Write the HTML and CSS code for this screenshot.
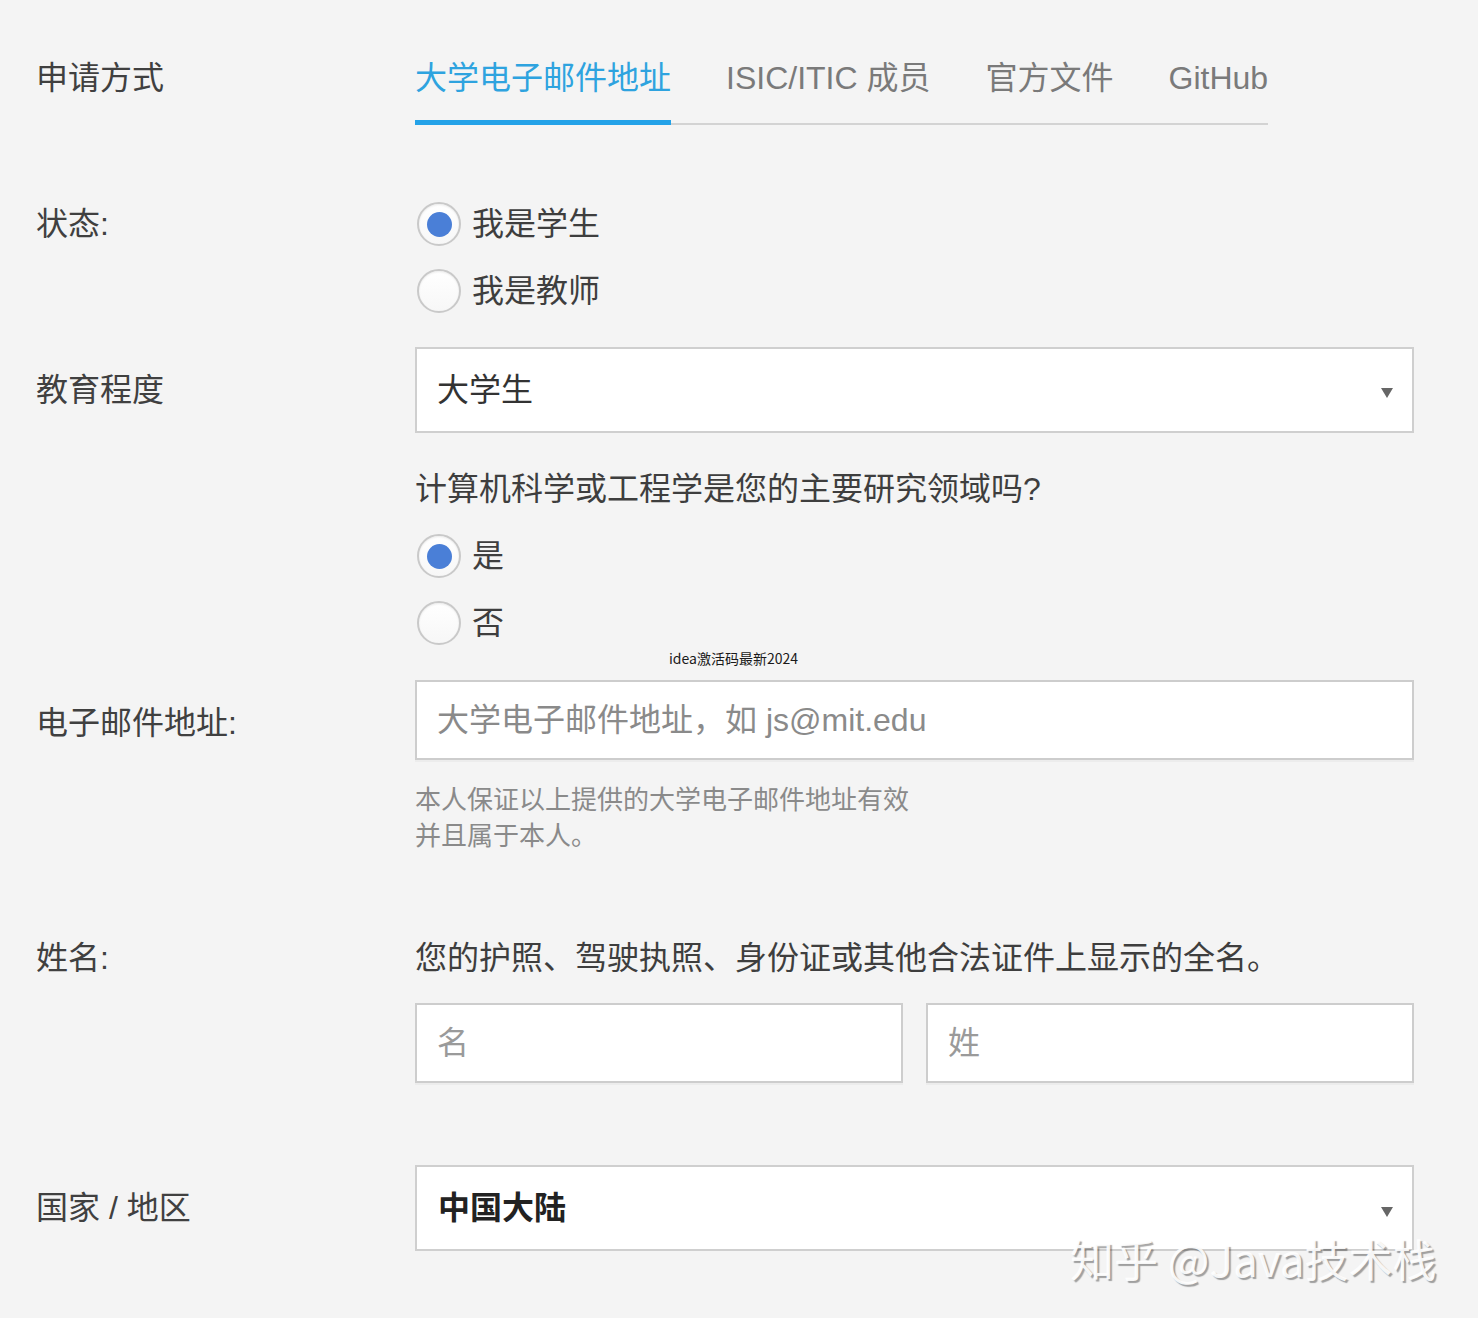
FILE: index.html
```html
<!DOCTYPE html>
<html lang="zh-CN">
<head>
<meta charset="utf-8">
<title>申请方式</title>
<link rel="stylesheet" href="styles.css">
</head>
<body>
<main class="form">
  <div class="row row-tabs">
    <div class="label">申请方式</div>
    <div class="field">
      <nav class="tabs">
        <span class="tab active">大学电子邮件地址</span>
        <span class="tab">ISIC/ITIC 成员</span>
        <span class="tab">官方文件</span>
        <span class="tab">GitHub</span>
      </nav>
    </div>
  </div>

  <div class="row row-status">
    <div class="label">状态:</div>
    <div class="field">
      <div class="radio-group">
        <div class="radio"><span class="dot checked"></span><span>我是学生</span></div>
        <div class="radio"><span class="dot"></span><span>我是教师</span></div>
      </div>
    </div>
  </div>

  <div class="row row-edu">
    <div class="label label-select">教育程度</div>
    <div class="field">
      <div class="select"><span class="select-text">大学生</span><span class="caret"></span></div>
      <p class="question">计算机科学或工程学是您的主要研究领域吗?</p>
      <div class="radio-group">
        <div class="radio"><span class="dot checked"></span><span>是</span></div>
        <div class="radio"><span class="dot"></span><span>否</span></div>
      </div>
      <div class="note">idea激活码最新2024</div>
    </div>
  </div>

  <div class="row row-email">
    <div class="label label-input">电子邮件地址:</div>
    <div class="field">
      <div class="input"><span class="placeholder">大学电子邮件地址，如 js@mit.edu</span></div>
      <p class="help">本人保证以上提供的大学电子邮件地址有效<br>并且属于本人。</p>
    </div>
  </div>

  <div class="row row-name">
    <div class="label">姓名:</div>
    <div class="field">
      <p class="desc">您的护照、驾驶执照、身份证或其他合法证件上显示的全名。</p>
      <div class="name-pair">
        <div class="input"><span class="placeholder light">名</span></div>
        <div class="input"><span class="placeholder light">姓</span></div>
      </div>
    </div>
  </div>

  <div class="row row-country">
    <div class="label label-select">国家 / 地区</div>
    <div class="field">
      <div class="select"><span class="select-text strong">中国大陆</span><span class="caret low"></span></div>
    </div>
  </div>
</main>
<div class="watermark">知乎 @Java技术栈</div>
</body>
</html>
```

FILE: styles.css
```css
html, body {
  margin: 0;
  padding: 0;
}

body {
  background: #f4f4f4;
  font-family: "Liberation Sans", "Noto Sans CJK SC", sans-serif;
  color: #404040;
  min-height: 1318px;
  position: relative;
}

.form {
  padding: 56px 0 40px 36px;
}

.row {
  display: flex;
  align-items: flex-start;
}

.label {
  width: 379px;
  flex: none;
  font-size: 32px;
  line-height: 44px;
  color: #404040;
}

.label-select {
  line-height: 86px;
}

.label-input {
  line-height: 80px;
  padding-top: 3px;
}

.field {
  width: 999px;
  flex: none;
}

/* tabs */
.tabs {
  display: inline-flex;
  border-bottom: 2px solid #d3d3d3;
}

.tab {
  font-size: 32px;
  line-height: 44px;
  color: #7a7a7a;
  padding-bottom: 20px;
  border-bottom: 5px solid transparent;
  margin-bottom: -2px;
  margin-right: 55px;
}

.tab:last-child {
  margin-right: 0;
}

.tab.active {
  color: #2ea3df;
  border-bottom-color: #24a2e8;
}

/* rows spacing */
.row-status { margin-top: 77px; }
.row-edu { margin-top: 34px; }
.row-email { margin-top: 13px; }
.row-name { margin-top: 82px; }
.row-country { margin-top: 82px; }

/* radios */
.radio-group {
  display: flex;
  flex-direction: column;
  gap: 23px;
}

.radio {
  display: flex;
  align-items: center;
  height: 44px;
  font-size: 32px;
  line-height: 40px;
  color: #3e3e3e;
  gap: 11px;
  padding-left: 2px;
}

.dot {
  width: 44px;
  height: 44px;
  box-sizing: border-box;
  border-radius: 50%;
  border: 2px solid #c9c9c9;
  background: linear-gradient(#ffffff, #f7f7f7);
  box-shadow: inset 0 1px 2px rgba(0, 0, 0, 0.08);
  display: flex;
  align-items: center;
  justify-content: center;
  flex: none;
}

.dot.checked::before {
  content: "";
  width: 25px;
  height: 25px;
  border-radius: 50%;
  background: #4a7fd7;
}

/* select */
.select {
  height: 86px;
  box-sizing: border-box;
  border: 2px solid #cfcfcf;
  background: #ffffff;
  display: flex;
  align-items: center;
  padding: 0 19px 0 20px;
}

.select-text {
  font-size: 32px;
  line-height: 40px;
  color: #333333;
  flex: 1;
}

.select-text.strong {
  font-weight: 700;
  color: #222222;
  padding-left: 1px;
}

.caret {
  width: 0;
  height: 0;
  border-left: 6.5px solid transparent;
  border-right: 6.5px solid transparent;
  border-top: 10px solid #666666;
  margin-top: 6px;
}

.caret.low {
  margin-top: 8px;
}

.question {
  margin: 34px 0 23px;
  font-size: 32px;
  line-height: 44px;
  color: #3e3e3e;
}

.note {
  margin-top: 4px;
  padding-left: 254px;
  font-size: 14px;
  line-height: 18px;
  color: #1a1a1a;
  font-family: "Noto Sans CJK SC", sans-serif;
}

/* inputs */
.input {
  height: 80px;
  box-sizing: border-box;
  border: 2px solid #cdcdcd;
  background: #ffffff;
  display: flex;
  align-items: center;
  padding: 0 20px;
  box-shadow: 0 2px 0 #ececec;
}

.placeholder {
  font-size: 32px;
  line-height: 40px;
  color: #8a8a8a;
}

.placeholder.light {
  color: #9a9a9a;
}

.help {
  margin: 22px 0 0;
  font-size: 26px;
  line-height: 36px;
  color: #8a8a8a;
}

.desc {
  margin: 0 0 23px;
  font-size: 32px;
  line-height: 44px;
  color: #3e3e3e;
}

.name-pair {
  display: grid;
  grid-template-columns: 1fr 1fr;
  gap: 23px;
}

/* watermark overlay */
.watermark {
  position: absolute;
  left: 1070px;
  top: 1232px;
  font-family: "Noto Sans CJK SC", sans-serif;
  font-size: 44px;
  line-height: 52px;
  color: rgba(255, 255, 255, 0.92);
  text-shadow: 2px 2px 1px rgba(0, 0, 0, 0.35);
  white-space: nowrap;
}
```
